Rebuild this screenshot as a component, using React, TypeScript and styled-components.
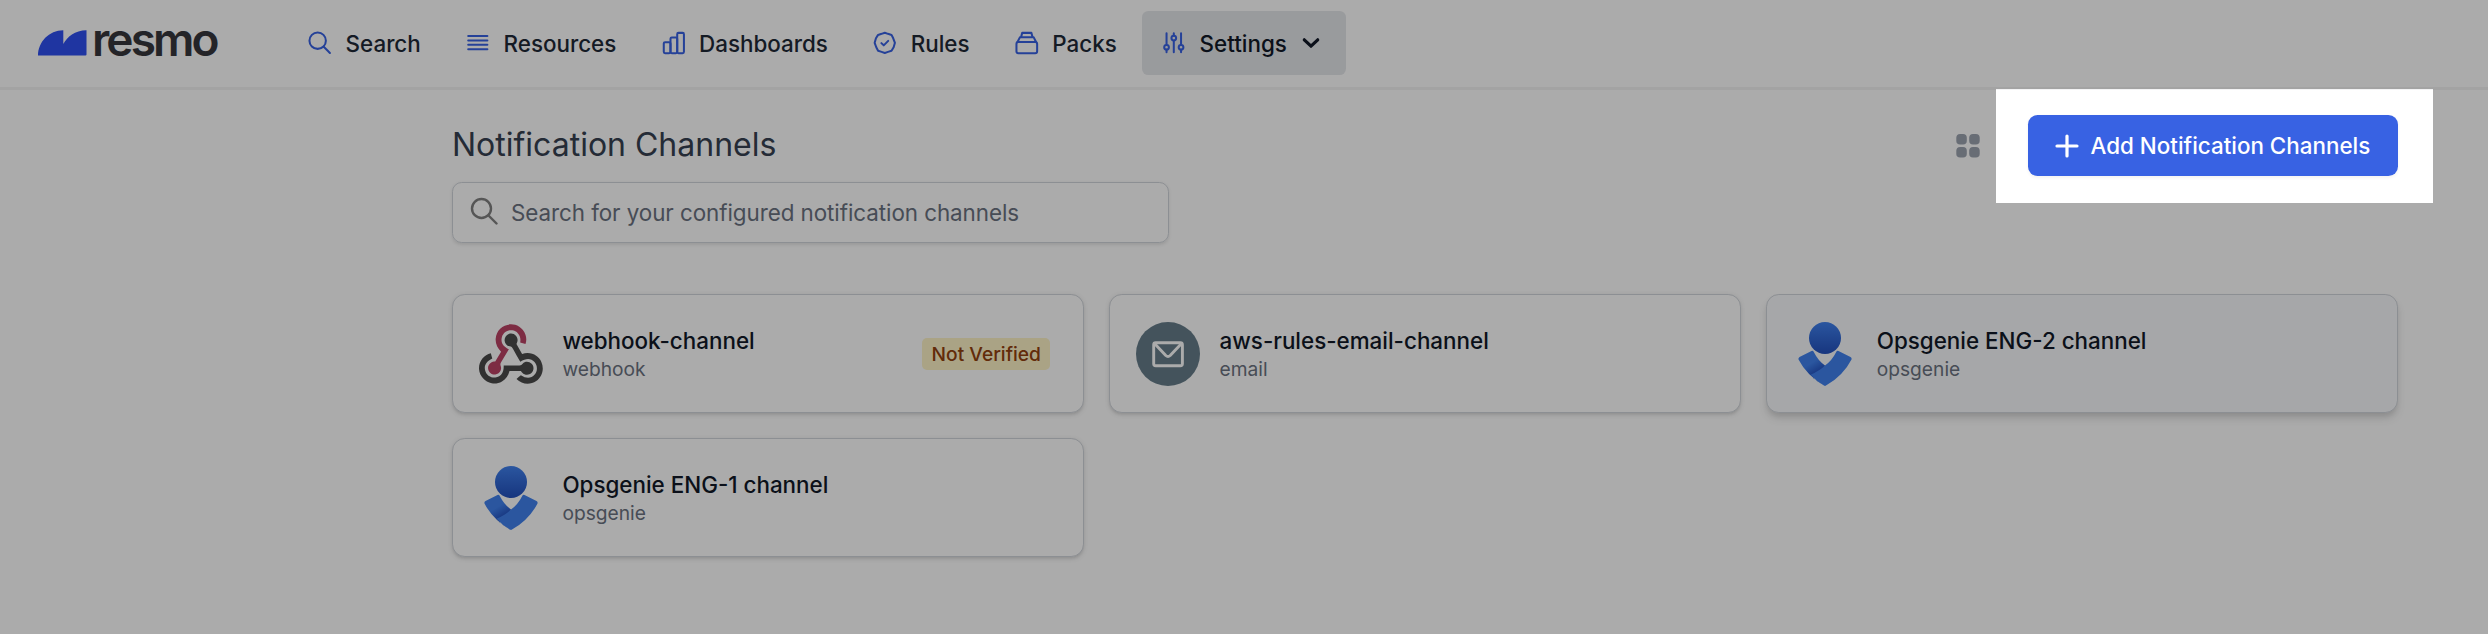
import React from 'react';
import styled, { createGlobalStyle } from 'styled-components';

const GlobalStyle = createGlobalStyle`
  *, *::before, *::after { box-sizing: border-box; }
  body { margin: 0; background: #fff; font-family: Inter, "Liberation Sans", sans-serif; }
`;

const Page = styled.div`
  position: relative;
  height: 634px;
  overflow: hidden;
  background: #fff;
`;

const Header = styled.header`
  display: flex;
  align-items: center;
  height: 90px;
  padding: 0 0 1px 38px;
  border-bottom: 3px solid #f3f3f4;
`;

const Logo = styled.a`
  display: flex;
  align-items: center;
  width: 250px;
  gap: 5px;
`;

const LogoWord = styled.span`
  color: #37373d;
  font-size: 46px;
  font-weight: 600;
  line-height: 46px;
  letter-spacing: -2.9px;
  margin-top: -8px;
`;

const Nav = styled.nav`
  display: flex;
  gap: 6px;
`;

const NavItem = styled.a<{ $active?: boolean }>`
  display: flex;
  align-items: center;
  height: 64px;
  padding: 0 19.2px;
  border-radius: 6.4px;
  font-size: 22.4px;
  font-weight: 500;
  color: ${p => (p.$active ? '#111827' : '#1f2937')};
  background: ${p => (p.$active ? '#e5e7eb' : 'transparent')};
`;

const NavIcon = styled.svg`
  width: 25.6px;
  height: 25.6px;
  margin-right: 12.8px;
  fill: none;
  stroke: #3862e3;
  stroke-width: 1.9;
  stroke-linecap: round;
  stroke-linejoin: round;
`;

const Chevron = styled.svg`
  width: 32px;
  height: 32px;
  margin-left: 8px;
`;

const Main = styled.main`
  display: flex;
  flex-direction: column;
  width: 1946px;
  margin-left: 452px;
  padding-top: 25px;
`;

const TitleRow = styled.div`
  display: flex;
  align-items: center;
  justify-content: space-between;
  height: 61px;
`;

const Title = styled.h1`
  margin: -2px 0 0;
  font-size: 32px;
  line-height: 40px;
  font-weight: 400;
  color: #374151;
`;

const Actions = styled.div`
  display: flex;
  align-items: center;
  gap: 44px;
`;

const GridIcon = styled.svg`
  width: 32px;
  height: 32px;
  fill: #9ca3af;
`;

const AddButton = styled.button`
  display: flex;
  align-items: center;
  width: 370px;
  height: 61px;
  padding: 0 25px;
  border: 0;
  border-radius: 9.6px;
  background: #3862e3;
  color: #fff;
  font: 500 22.4px Inter, sans-serif;
  box-shadow: 0 1.6px 3.2px rgba(0, 0, 0, 0.05);
  white-space: nowrap;
`;

const PlusIcon = styled.svg`
  width: 28px;
  height: 28px;
  margin-right: 9.5px;
`;

const SearchField = styled.div`
  display: flex;
  align-items: center;
  width: 717px;
  height: 61px;
  margin-top: 6px;
  padding-left: 17px;
  border: 1.6px solid #d1d5db;
  border-radius: 9.6px;
  box-shadow: 0 1.6px 3.2px rgba(0, 0, 0, 0.1);
  font-size: 22.4px;
  letter-spacing: -0.06px;
  color: #6b7280;
`;

const SearchIcon = styled.svg`
  width: 28px;
  height: 28px;
  margin: -3px 13px 0 0;
`;

const CardGrid = styled.div`
  display: grid;
  grid-template-columns: repeat(3, 1fr);
  gap: 25px 25.5px;
  margin-top: 51px;
`;

const Card = styled.article<{ $hovered?: boolean }>`
  display: flex;
  align-items: center;
  height: 119px;
  padding: 0 32.5px 0 25.6px;
  border: 1.6px solid #d1d5db;
  border-radius: 12.8px;
  background: ${p => (p.$hovered ? '#f8fafc' : '#fff')};
  box-shadow: ${p =>
    p.$hovered
      ? '0 6.4px 9.6px -1.6px rgba(0,0,0,.12), 0 3.2px 6.4px -2px rgba(0,0,0,.1)'
      : '0 1.6px 4.8px rgba(0,0,0,.1), 0 1.6px 3.2px -1.6px rgba(0,0,0,.1)'};
`;

const CardIcon = styled.svg`
  width: 64px;
  height: 64px;
  flex: none;
  margin-right: 19.8px;
`;

const CardText = styled.div`
  flex: 1;
`;

const CardName = styled.div`
  font-size: 22.4px;
  line-height: 32px;
  font-weight: 500;
  color: #111827;
`;

const CardKind = styled.div`
  font-size: 19.2px;
  line-height: 25.6px;
  color: #6b7280;
`;

const Badge = styled.span`
  display: flex;
  align-items: center;
  height: 32px;
  padding: 0 9.2px;
  border-radius: 5px;
  background: #fef3c7;
  color: #92400e;
  font-size: 19.2px;
  font-weight: 500;
`;

const Spotlight = styled.div`
  position: absolute;
  left: 1996px;
  top: 89px;
  width: 437px;
  height: 114px;
  box-shadow: 0 0 0 2600px rgba(0, 0, 0, 0.33);
  pointer-events: none;
`;

const LogoMark = () => (
  <svg width="49" height="26" viewBox="0 0 49 26">
    <path d="M0 25.5C0 12 11 .2 25.300 .2V14C29 7 37 .2 48.500 .2V24.500Q48.500 25.500 47.500 25.500Z" fill="#2f4ff0" />
  </svg>
);

const navItems = [
  { label: 'Search', icon: <><circle cx="10" cy="10" r="7.700" /><path d="M15.700 15.700 21.500 21.500" /></> },
  { label: 'Resources', icon: <path d="M3 5.700h18M3 9.900h18M3 13.900h18M3 18.100h18" /> },
  {
    label: 'Dashboards',
    icon: (
      <>
        <rect x="2.600" y="11.500" width="6.300" height="10.200" rx="1.200" />
        <rect x="8.900" y="7" width="6.300" height="14.700" rx="1.200" />
        <rect x="15.200" y="2.700" width="6.300" height="19" rx="1.200" />
      </>
    ),
  },
  {
    label: 'Rules',
    icon: (
      <path d="M8.800 12.300 11 14.400 15.200 10.200M12 2.600 15 3.600 18.300 4.600 19.900 7.800 21.500 12 20.300 16.200 18.300 19.500 15 20.500 12 21.500 9 20.500 5.700 19.500 4 16.200 2.500 12 3.700 7.800 5.700 4.600 9 3.600Z" />
    ),
  },
  {
    label: 'Packs',
    icon: (
      <>
        <rect x="2.300" y="11.300" width="19.400" height="10.400" rx="1.800" />
        <path d="M3.300 11.300 5.500 6.900H18.500L20.700 11.300M6.600 6.800 7.700 2.700H16.300L17.400 6.800" />
      </>
    ),
  },
  {
    label: 'Settings',
    active: true,
    icon: (
      <>
        <circle cx="5.200" cy="16.200" r="2.200" />
        <circle cx="12" cy="7.600" r="2.200" />
        <circle cx="18.800" cy="16.200" r="2.200" />
        <path d="M5.200 3V13.800M5.200 18.500V20.800M12 3V5.300M12 10V20.800M18.800 3V13.800M18.800 18.500V20.800" />
      </>
    ),
  },
];

const WebhookIcon = () => (
  <CardIcon viewBox="0 -8.500 256 256">
    <path fill="#bb4265" d="M119.54 100.503c-10.61 17.836-20.775 35.108-31.152 52.25c-2.665 4.401-3.984 7.986-1.855 13.58c5.878 15.454-2.414 30.493-17.998 34.575c-14.697 3.851-29.016-5.808-31.932-21.543c-2.584-13.927 8.224-27.58 23.58-29.757c1.286-.184 2.6-.205 4.762-.367l23.358-39.168C73.612 95.465 64.868 78.39 66.803 57.23c1.368-14.957 7.25-27.883 18-38.477c20.59-20.288 52.002-23.573 76.246-8.001c23.284 14.958 33.948 44.094 24.858 69.031c-6.854-1.858-13.756-3.732-21.343-5.79c2.854-13.865.743-26.315-8.608-36.981c-6.178-7.042-14.106-10.733-23.12-12.093c-18.072-2.73-35.815 8.88-41.08 26.618c-5.976 20.132 3.069 36.575 27.784 48.967z" />
    <path fill="#4b4b4b" d="M149.841 79.41c7.475 13.187 15.065 26.573 22.587 39.836c38.02-11.763 66.686 9.284 76.97 31.817c12.422 27.219 3.93 59.457-20.465 76.25c-25.04 17.238-56.707 14.293-78.892-7.851c5.654-4.733 11.336-9.487 17.407-14.566c21.912 14.192 41.077 13.524 55.305-3.282c12.133-14.337 11.87-35.714-.615-49.75c-14.408-16.197-33.707-16.691-57.035-1.143c-9.677-17.168-19.522-34.199-28.893-51.491c-3.16-5.828-6.648-9.21-13.77-10.443c-11.893-2.062-19.571-12.275-20.032-23.717c-.453-11.316 6.214-21.545 16.634-25.53c10.322-3.949 22.435-.762 29.378 8.014c5.674 7.17 7.477 15.24 4.491 24.083c-.83 2.466-1.905 4.852-3.07 7.774z" />
    <path fill="#4a4a4a" d="M167.707 187.21h-45.77c-4.387 18.044-13.863 32.612-30.19 41.876c-12.693 7.2-26.373 9.641-40.933 7.29c-26.808-4.323-48.728-28.456-50.658-55.63c-2.184-30.784 18.975-58.147 47.178-64.293c1.947 7.071 3.915 14.21 5.862 21.264c-25.876 13.202-34.832 29.836-27.59 50.636c6.375 18.304 24.484 28.337 44.147 24.457c20.08-3.962 30.204-20.65 28.968-47.432c19.036 0 38.088-.197 57.126.097c7.434.117 13.173-.654 18.773-7.208c9.22-10.784 26.191-9.811 36.121.374c10.148 10.409 9.662 27.157-1.077 37.127c-10.361 9.62-26.73 9.106-36.424-1.26c-1.992-2.136-3.562-4.673-5.533-7.298z" />
  </CardIcon>
);

const EmailIcon = () => (
  <CardIcon viewBox="0 0 64 64">
    <circle cx="32" cy="32" r="32" fill="#667d8a" />
    <g fill="none" stroke="#fff" strokeWidth="2.900" strokeLinejoin="round">
      <rect x="17.700" y="20.700" width="28.700" height="23" rx="2" />
      <path d="M18.500 21.500 29.800 33.500Q32 35.500 34.200 33.500L45.500 21.500" />
    </g>
  </CardIcon>
);

const OpsgenieIcon = () => (
  <CardIcon viewBox="0 0 64 64">
    <defs>
      <linearGradient id="opsHead" x1="0" y1="0" x2="0" y2="1">
        <stop offset="0" stopColor="#4081ee" />
        <stop offset="1" stopColor="#2350bd" />
      </linearGradient>
      <linearGradient id="opsArm" gradientUnits="userSpaceOnUse" x1="14" y1="36" x2="24" y2="52">
        <stop offset="0.350" stopColor="#4081ee" />
        <stop offset="1" stopColor="#2350bd" />
      </linearGradient>
    </defs>
    <circle cx="32" cy="16" r="16" fill="url(#opsHead)" />
    <path d="M32 64Q14 54 5.500 37.500Q5 36 6.500 35L18.500 29Q20 28.400 20.800 30Q25 38.500 32 43.500L30 52L20 56Z" fill="url(#opsArm)" />
    <path d="M31 63.600Q23 59 17.500 52.800Q27 48.500 32 43.500Q39 38.500 43.200 30Q44 28.400 45.500 29L57.500 35Q59 36 58.500 37.500Q50 54 33 63.600Q32 64.200 31 63.600Z" fill="#4081ee" />
  </CardIcon>
);

const channels = [
  { name: 'webhook-channel', kind: 'webhook', icon: <WebhookIcon />, badge: 'Not Verified' },
  { name: 'aws-rules-email-channel', kind: 'email', icon: <EmailIcon /> },
  { name: 'Opsgenie ENG-2 channel', kind: 'opsgenie', icon: <OpsgenieIcon />, hovered: true },
  { name: 'Opsgenie ENG-1 channel', kind: 'opsgenie', icon: <OpsgenieIcon /> },
];

export default function App() {
  return (
    <Page>
      <GlobalStyle />
      <Header>
        <Logo>
          <LogoMark />
          <LogoWord>resmo</LogoWord>
        </Logo>
        <Nav>
          {navItems.map(item => (
            <NavItem key={item.label} $active={item.active}>
              <NavIcon viewBox="0 0 24 24">{item.icon}</NavIcon>
              {item.label}
              {item.active && (
                <Chevron viewBox="0 0 20 20">
                  <path d="m5.800 8 4.200 4 4.200-4" fill="none" stroke="#111827" strokeWidth="2" strokeLinecap="round" strokeLinejoin="round" />
                </Chevron>
              )}
            </NavItem>
          ))}
        </Nav>
      </Header>
      <Main>
        <TitleRow>
          <Title>Notification Channels</Title>
          <Actions>
            <GridIcon viewBox="0 0 32 32">
              <rect x="4.300" y="4" width="10.500" height="10.500" rx="3.800" />
              <rect x="17.200" y="4" width="10.500" height="10.500" rx="3.800" />
              <rect x="4.300" y="17" width="10.500" height="10.500" rx="3.800" />
              <rect x="17.200" y="17" width="10.500" height="10.500" rx="3.800" />
            </GridIcon>
            <AddButton>
              <PlusIcon viewBox="0 0 28 28">
                <path d="M14 4v20M4 14h20" stroke="#fff" strokeWidth="3.200" strokeLinecap="round" />
              </PlusIcon>
              Add Notification Channels
            </AddButton>
          </Actions>
        </TitleRow>
        <SearchField>
          <SearchIcon viewBox="0 0 28 28" fill="none" stroke="#808080" strokeWidth="2.400" strokeLinecap="round">
            <circle cx="11.500" cy="11.500" r="9.500" />
            <path d="m18.500 18.500 8 8" />
          </SearchIcon>
          Search for your configured notification channels
        </SearchField>
        <CardGrid>
          {channels.map(channel => (
            <Card key={channel.name} $hovered={channel.hovered}>
              {channel.icon}
              <CardText>
                <CardName>{channel.name}</CardName>
                <CardKind>{channel.kind}</CardKind>
              </CardText>
              {channel.badge && <Badge>{channel.badge}</Badge>}
            </Card>
          ))}
        </CardGrid>
      </Main>
      <Spotlight />
    </Page>
  );
}
